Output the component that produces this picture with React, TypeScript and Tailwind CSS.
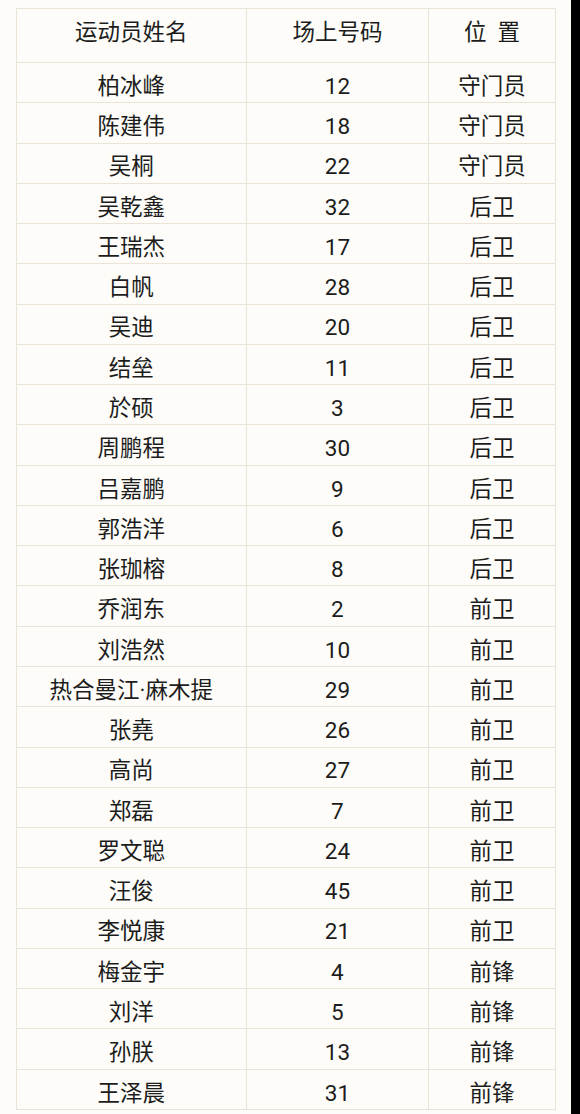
import type { ReactNode } from 'react';

const players: [string, string, string][] = [
  ['柏冰峰', '12', '守门员'],
  ['陈建伟', '18', '守门员'],
  ['吴桐', '22', '守门员'],
  ['吴乾鑫', '32', '后卫'],
  ['王瑞杰', '17', '后卫'],
  ['白帆', '28', '后卫'],
  ['吴迪', '20', '后卫'],
  ['结垒', '11', '后卫'],
  ['於硕', '3', '后卫'],
  ['周鹏程', '30', '后卫'],
  ['吕嘉鹏', '9', '后卫'],
  ['郭浩洋', '6', '后卫'],
  ['张珈榕', '8', '后卫'],
  ['乔润东', '2', '前卫'],
  ['刘浩然', '10', '前卫'],
  ['热合曼江·麻木提', '29', '前卫'],
  ['张堯', '26', '前卫'],
  ['高尚', '27', '前卫'],
  ['郑磊', '7', '前卫'],
  ['罗文聪', '24', '前卫'],
  ['汪俊', '45', '前卫'],
  ['李悦康', '21', '前卫'],
  ['梅金宇', '4', '前锋'],
  ['刘洋', '5', '前锋'],
  ['孙朕', '13', '前锋'],
  ['王泽晨', '31', '前锋'],
];

function Row({ cells, header }: { cells: [ReactNode, ReactNode, ReactNode]; header?: boolean }) {
  const pad = header ? 'pb-[6px]' : 'pt-[7px]';
  return (
    <div className={`flex border-b border-[#ebe3d6] ${header ? 'h-[54px]' : 'flex-1'}`}>
      <div className={`flex w-[230px] items-center justify-center border-r border-[#ebe3d6] ${pad}`}>{cells[0]}</div>
      <div className={`flex w-[183px] items-center justify-center border-r border-[#ebe3d6] ${pad}`}>{cells[1]}</div>
      <div className={`flex w-[126px] items-center justify-center ${pad}`}>{cells[2]}</div>
    </div>
  );
}

export default function App() {
  return (
    <div className="flex h-[1114px] w-[580px] bg-[#fdfcf8] text-[#1c1c1c]" style={{ fontFamily: 'Roboto, "Noto Sans CJK SC", sans-serif' }}>
      <div className="flex-1 pl-[16px] pt-[8px] pb-[4px]">
        <div className="flex h-full w-[540px] flex-col border-l border-t border-r border-[#ebe3d6] text-[22.5px] leading-none">
          <Row
            cells={[
              '运动员姓名',
              '场上号码',
              <span className="flex gap-[11px]">
                <span>位</span>
                <span>置</span>
              </span>,
            ]}
            header
          />
          {players.map((p) => (
            <Row key={p[0]} cells={p} />
          ))}
        </div>
      </div>
      <div className="w-[9px] bg-black" />
    </div>
  );
}
